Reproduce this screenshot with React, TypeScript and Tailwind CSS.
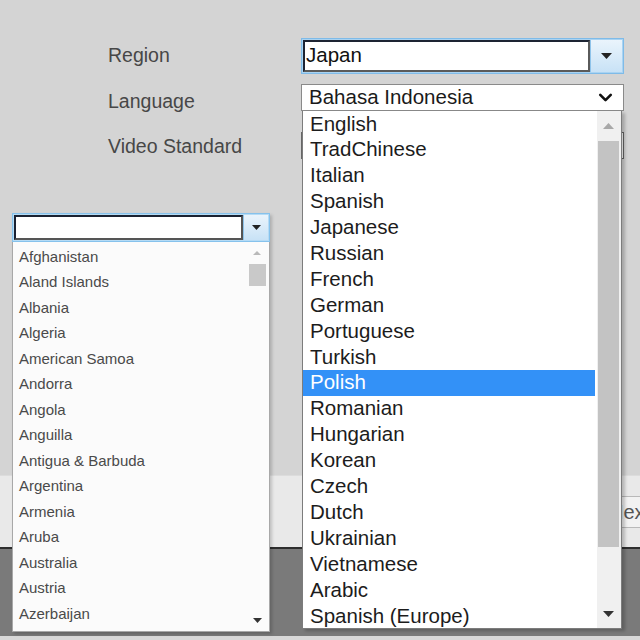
import React from 'react';
import { ChevronDown } from 'lucide-react';

const languages = [
  'English', 'TradChinese', 'Italian', 'Spanish', 'Japanese', 'Russian', 'French',
  'German', 'Portuguese', 'Turkish', 'Polish', 'Romanian', 'Hungarian', 'Korean',
  'Czech', 'Dutch', 'Ukrainian', 'Vietnamese', 'Arabic', 'Spanish (Europe)',
];

const countries = [
  'Afghanistan', 'Aland Islands', 'Albania', 'Algeria', 'American Samoa', 'Andorra',
  'Angola', 'Anguilla', 'Antigua & Barbuda', 'Argentina', 'Armenia', 'Aruba',
  'Australia', 'Austria', 'Azerbaijan',
];

// small filled triangle used in the scroll arrows and combo buttons
function Tri({ dir = 'down', w = 10, color = '#222' }: { dir?: 'up' | 'down'; w?: number; color?: string }) {
  const h = Math.round(w * 0.55);
  const pts = dir === 'down' ? `0,0 ${w},0 ${w / 2},${h}` : `0,${h} ${w},${h} ${w / 2},0`;
  return (
    <svg width={w} height={h} viewBox={`0 0 ${w} ${h}`}>
      <polygon points={pts} fill={color} />
    </svg>
  );
}

function ComboButton({ className, tri }: { className: string; tri: number }) {
  return (
    <div className={`flex items-center justify-center bg-gradient-to-b from-[#eaf4fc] to-[#c8e2f6] border-l border-[#8ec3ea] ${className}`}>
      <Tri w={tri} />
    </div>
  );
}

export default function App() {
  return (
    <div className="relative w-[640px] h-[640px] overflow-hidden bg-[#d4d4d4] flex flex-col font-['Liberation_Sans',Arial,sans-serif]">
      {/* settings form */}
      <div className="h-[475px] pl-[108px] pt-[33px]">
        <div className="grid grid-cols-[193px_323px] auto-rows-[45px] items-center">
          <span className="text-[19.5px] text-[#474747]">Region</span>
          <div className="flex h-[36px] border border-[#7fbbe8] bg-[#a9d3f2] p-px">
            <div className="flex-1 flex items-center bg-white border-2 border-t-[#1d2433] border-l-[#1d2433] border-r-[#5a5a5a] border-b-[#5a5a5a] px-[1px] text-[20.5px] text-[#111]">
              Japan
            </div>
            <ComboButton className="w-[32px]" tri={11} />
          </div>

          <span className="text-[19.5px] text-[#474747] relative top-[1px]">Language</span>
          <div className="flex items-center justify-between h-[27px] bg-white border border-[#8a8a8a] pl-[7px] pr-[7px] text-[20.5px] text-[#1a1a1a] relative top-[-3px]">
            Bahasa Indonesia
            <ChevronDown size={21} strokeWidth={3} color="#111" />
          </div>

          <span className="text-[19.5px] text-[#474747] relative top-[1px]">Video Standard</span>
          <div className="h-[27px] bg-white border border-[#666]" />
        </div>
      </div>

      {/* button strip */}
      <div className="h-[72px] bg-[#e9e9e9] border-t border-[#dcdcdc] flex items-center justify-end">
        <button className="h-[32px] w-[46px] mr-[-4px] bg-[#f2f2f2] border-y border-l border-[#b9b9b9] text-left pl-[10px] text-[20px] text-[#555]">
          Next
        </button>
      </div>

      {/* dark area */}
      <div className="flex-1 bg-[#7a7a7a] border-t-2 border-[#2e2e2e]" />
      <div className="h-[4px] bg-[#d8d8d8]" />

      {/* country combo, opened */}
      <div className="absolute left-[12px] top-[213px] w-[258px] shadow-[2px_2px_3px_rgba(0,0,0,0.18)]">
        <div className="flex h-[29px] border border-[#86c2ec] bg-[#b5dbf5] p-px">
          <div className="flex-1 bg-white border-2 border-t-[#1b2232] border-l-[#1b2232] border-r-[#555] border-b-[#555]" />
          <ComboButton className="w-[25px]" tri={9} />
        </div>
        <div className="flex h-[390px] bg-[#fbfbfb] border border-[#a8a8a8] border-t-0">
          <div className="flex-1 pt-[2px]">
            {countries.map((c) => (
              <div key={c} className="h-[25.5px] flex items-center pl-[6px] text-[15px] text-[#4a4a4a]">
                {c}
              </div>
            ))}
          </div>
          <div className="w-[20px] mr-[2px] flex flex-col items-center">
            <div className="h-[22px] flex items-center justify-center">
              <Tri dir="up" w={8} color="#b9b9b9" />
            </div>
            <div className="w-[17px] h-[22px] bg-[#c9c9c9]" />
            <div className="flex-1" />
            <div className="h-[22px] flex items-center justify-center">
              <Tri w={9} color="#333" />
            </div>
          </div>
        </div>
      </div>

      {/* language list, opened */}
      <div className="absolute left-[302px] top-[111px] w-[320px] h-[518px] flex bg-white border border-[#7c7c7c] border-t-0 shadow-[3px_2px_3px_rgba(0,0,0,0.22)]">
        <div className="flex-1 pr-[2px]">
          {languages.map((l) => (
            <div
              key={l}
              className={`h-[25.9px] flex items-center pl-[7px] text-[20.5px] ${
                l === 'Polish' ? 'bg-[#3391f7] text-white' : 'text-[#1c1c1c]'
              }`}
            >
              {l}
            </div>
          ))}
        </div>
        <div className="w-[24px] bg-[#f0f0f0] flex flex-col items-center pr-[1px]">
          <div className="h-[30px] flex items-center justify-center">
            <Tri dir="up" w={11} color="#a8a8a8" />
          </div>
          <div className="w-[21px] h-[406px] bg-[#c3c3c3]" />
          <div className="flex-1" />
          <div className="h-[28px] flex items-center justify-center">
            <Tri w={11} color="#333" />
          </div>
        </div>
      </div>
    </div>
  );
}
